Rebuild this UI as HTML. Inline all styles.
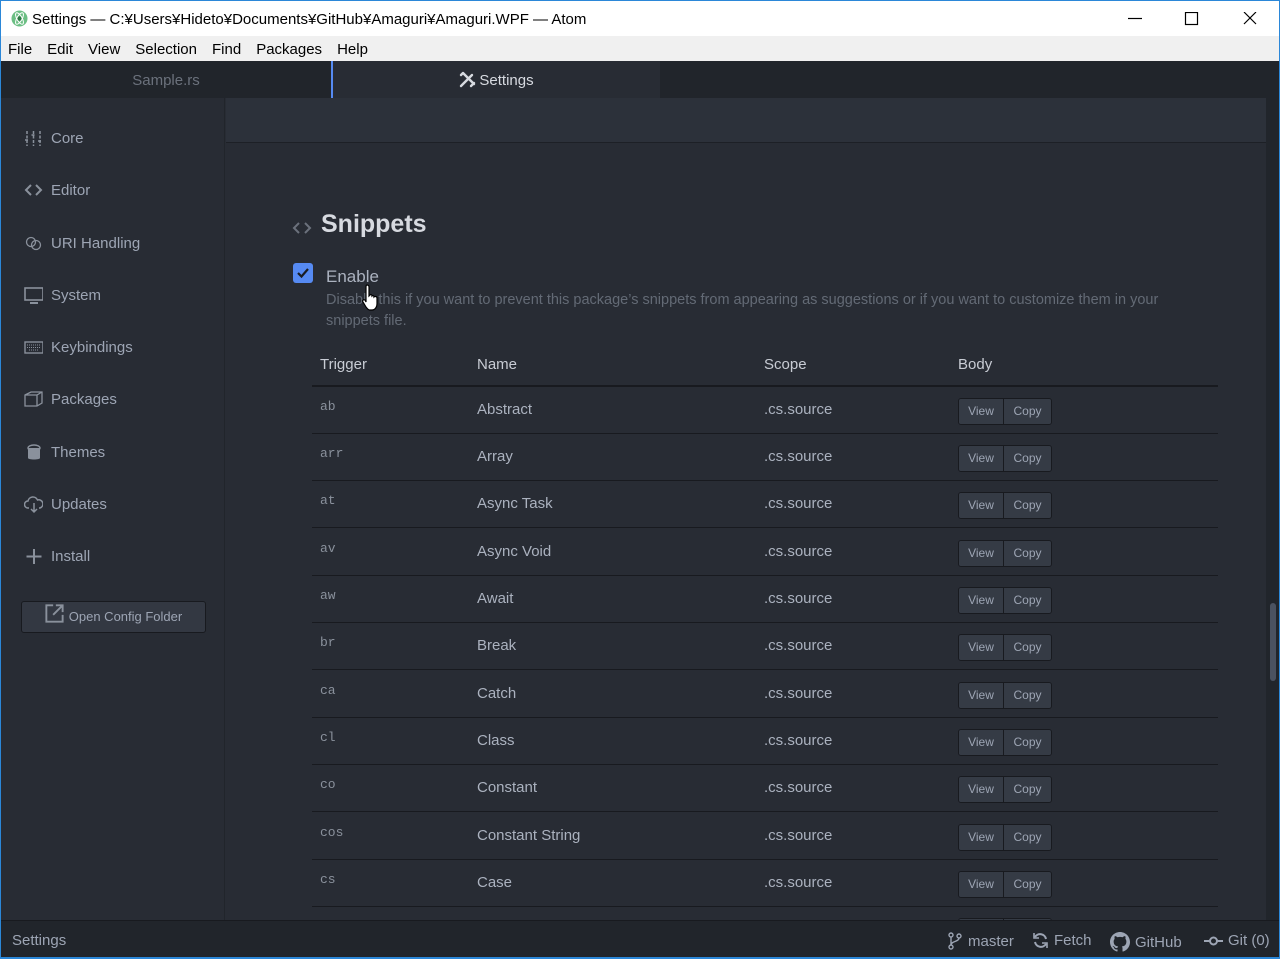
<!DOCTYPE html>
<html><head><meta charset="utf-8"><style>
*{box-sizing:border-box;margin:0;padding:0}
body{width:1280px;height:959px;overflow:hidden;background:#282c34;font-family:"Liberation Sans","Noto Sans CJK JP",sans-serif;position:relative;color:#9da5b4}
.abs{position:absolute}
#win{position:absolute;left:0;top:0;width:1280px;height:959px;border:1px solid #2b87d8;border-top:1px solid #2b87d8}
#title{left:1px;top:1px;width:1278px;height:35px;background:#fff;color:#000;font-size:15px;line-height:35px}
#menu{left:1px;top:36px;width:1278px;height:25px;background:#f0f0f0;color:#000;font-size:15px;line-height:27px}
#menu span{margin-left:7px;margin-right:8px}
#tabs{left:1px;top:61px;width:1278px;height:37px;background:#21252b}
.side a{position:absolute;left:23px;font-size:15px;color:#9da5b4;display:flex;align-items:center;gap:8px}
.side svg{width:19px;height:19px}
.row{position:absolute;left:312px;width:906px;height:47px;border-bottom:1px solid #181a1f;font-size:15px;color:#abb2bf}
.row .t{position:absolute;left:8px;top:12px;font-family:"Liberation Mono",monospace;font-size:13px;color:#8a919c}
.row .n{position:absolute;left:165px;top:14px}
.row .s{position:absolute;left:452px;top:14px}
.btns{position:absolute;left:646px;top:11px;height:27px;display:flex;border:1px solid #181a1f;border-radius:3px;overflow:hidden;font-size:12px;color:#9da5b4}
.btns span{background:#353b45;line-height:25px;display:block}
.btns span:first-child{width:45px;text-align:center;border-right:1px solid #181a1f}
.btns span:last-child{width:47px;text-align:center}
.st{font-size:15px;color:#9da5b4;top:931px;display:flex;align-items:center;gap:5px}
</style></head><body>
<div id="win"></div>
<div id="title" class="abs">
 <svg class="abs" style="left:10px;top:9px" width="17" height="17" viewBox="0 0 17 17"><circle cx="8.5" cy="8.5" r="8" fill="#6cbf84"/><circle cx="8.5" cy="8.5" r="2.3" fill="#2e7a45"/><ellipse cx="8.5" cy="8.5" rx="6.5" ry="2.6" fill="none" stroke="#fff" stroke-width="1" transform="rotate(60 8.5 8.5)"/><ellipse cx="8.5" cy="8.5" rx="6.5" ry="2.6" fill="none" stroke="#fff" stroke-width="1" transform="rotate(-60 8.5 8.5)"/></svg>
 <span class="abs" style="left:31px;top:1px">Settings — C:¥Users¥Hideto¥Documents¥GitHub¥Amaguri¥Amaguri.WPF — Atom</span>
 <svg class="abs" style="left:1127px;top:11px" width="140" height="14" viewBox="0 0 140 14"><path d="M0 6.5h14" stroke="#000" stroke-width="1.2"/><rect x="57.5" y="0.5" width="12" height="12" fill="none" stroke="#000" stroke-width="1.2"/><path d="M116 0l12 12M128 0l-12 12" stroke="#000" stroke-width="1.2"/></svg>
</div>
<div id="menu" class="abs"><span>File</span><span>Edit</span><span>View</span><span>Selection</span><span>Find</span><span>Packages</span><span>Help</span></div>
<div id="tabs" class="abs">
 <div class="abs" style="left:0;top:0;width:330px;height:37px;color:#6b717c;font-size:15px;text-align:center;line-height:40px">Sample.rs</div>
 <div class="abs" style="left:330px;top:0;width:329px;height:38px;background:#282c34;border-left:2px solid #568af2;color:#d7dae0;font-size:15px;line-height:40px;text-align:center">
  <svg style="vertical-align:-3px;margin-right:3px" width="17" height="17" viewBox="0 0 17 17"><path d="M2 15L13 4M4 2l11 11M12 15l3-3M2 4l2-2" stroke="#d7dae0" stroke-width="2.4" fill="none" stroke-linecap="round"/></svg>Settings</div>
</div>
<!-- sidebar -->
<div class="abs side" style="left:1px;top:98px;width:224px;height:822px;background:#282c34;border-right:1px solid #21252b">
 <a style="top:31px"><svg viewBox="0 0 19 19"><path d="M3 2v15M9.5 2v15M16 2v15M1 11h4M7.5 6h4M14 12h4" stroke="#8a919c" stroke-width="1.5" stroke-dasharray="3 1.5"/></svg>Core</a>
 <a style="top:83px"><svg viewBox="0 0 19 19"><path d="M7 4L2 9l5 5M12 4l5 5-5 5" stroke="#8a919c" stroke-width="2" fill="none"/></svg>Editor</a>
 <a style="top:136px"><svg viewBox="0 0 19 19"><circle cx="7" cy="8" r="4.5" stroke="#8a919c" fill="none" stroke-width="1.3"/><circle cx="12" cy="11" r="4.5" stroke="#8a919c" fill="none" stroke-width="1.3"/></svg>URI Handling</a>
 <a style="top:188px"><svg viewBox="0 0 19 19"><rect x="1" y="2" width="18" height="12" fill="none" stroke="#8a919c" stroke-width="1.6"/><path d="M6 17h8" stroke="#8a919c" stroke-width="2"/></svg>System</a>
 <a style="top:240px"><svg viewBox="0 0 19 19"><rect x="1" y="4" width="18" height="11" fill="none" stroke="#8a919c" stroke-width="1.4"/><path d="M3 7h14M3 9.5h14M5 12h10" stroke="#8a919c" stroke-dasharray="1 1"/></svg>Keybindings</a>
 <a style="top:292px"><svg viewBox="0 0 19 19"><path d="M1 5l6-3h11v11l-5 3H1z M1 5h12v11M13 5l5-3" fill="none" stroke="#8a919c" stroke-width="1.3"/></svg>Packages</a>
 <a style="top:345px"><svg viewBox="0 0 19 19"><ellipse cx="10" cy="5" rx="6" ry="3" fill="none" stroke="#8a919c" stroke-width="1.4"/><path d="M4 5v10c0 2 12 2 12 0V5" fill="#8a919c"/></svg>Themes</a>
 <a style="top:397px"><svg viewBox="0 0 19 19"><path d="M5 13H4a3.5 3.5 0 010-7 5 5 0 019.5-1A3.5 3.5 0 0116 13h-1M10 8v9M7 14l3 3 3-3" fill="none" stroke="#8a919c" stroke-width="1.5"/></svg>Updates</a>
 <a style="top:449px"><svg viewBox="0 0 19 19"><path d="M10 2v15M2.5 9.5h15" stroke="#8a919c" stroke-width="2"/></svg>Install</a>
 <div class="abs" style="left:20px;top:503px;width:185px;height:32px;background:#333842;border:1px solid #181a1f;border-radius:3px;font-size:13px;color:#9da5b4;text-align:center;line-height:30px"><svg width="14" height="14" viewBox="0 0 14 14" style="vertical-align:-2px;margin-right:5px"><path d="M6 1H1v12h12V8M8 1h5v5M13 1L6 8" fill="none" stroke="#8a919c" stroke-width="1.4"/></svg>Open Config Folder</div>
</div>
<!-- content -->
<div class="abs" style="left:226px;top:98px;width:1040px;height:45px;background:#2c313a;border-bottom:1px solid #1d2026"></div>
<div class="abs" style="left:1266px;top:98px;width:13px;height:822px;background:#21252b"></div>
<div class="abs" style="left:1270px;top:603px;width:6px;height:78px;background:#4b5260;border-radius:3px"></div>
<svg class="abs" style="left:292px;top:220px" width="20" height="16" viewBox="0 0 20 16"><path d="M7 3L2 8l5 5M13 3l5 5-5 5" stroke="#6b717c" stroke-width="2" fill="none"/></svg>
<div class="abs" style="left:321px;top:210px;font-size:25px;color:#d7dae0;font-weight:bold">Snippets</div>
<div class="abs" style="left:293px;top:263px;width:20px;height:20px;background:#568af2;border-radius:3px"><svg width="20" height="20"><path d="M5 10l3.5 3.5L15 6" stroke="#1a1d22" stroke-width="2.2" fill="none"/></svg></div>
<div class="abs" style="left:326px;top:267px;font-size:17px;color:#abb2bf">Enable</div>
<div class="abs" style="left:326px;top:290px;width:865px;font-size:14.5px;line-height:21px;color:#636a75">Disable this if you want to prevent this package’s snippets from appearing as suggestions or if you want to customize them in your snippets file.</div>
<svg class="abs" style="left:362px;top:283px" width="22" height="30" viewBox="0 0 22 30"><path d="M5 2c1.5 0 2 1 2 2v9l1-1c1-1 2 0 2 1 1-1 2 0 2 1 1-1 3-0.5 3 1v6c0 3-2 6-5 6H8c-2 0-3-2-4-3l-3-5c-1-1 0-3 2-2l1 2V4c0-1 0-2 1-2z" fill="#fff" stroke="#000" stroke-width="1.2"/></svg>
<div class="abs" style="left:312px;top:356px;width:906px;height:31px;border-bottom:2px solid #181a1f;font-size:15px;color:#c8ccd4">
 <span class="abs" style="left:8px">Trigger</span><span class="abs" style="left:165px">Name</span><span class="abs" style="left:452px">Scope</span><span class="abs" style="left:646px">Body</span>
</div>
<div class="row" style="top:387px"><span class="t">ab</span><span class="n">Abstract</span><span class="s">.cs.source</span><div class="btns"><span>View</span><span>Copy</span></div></div>
<div class="row" style="top:434px"><span class="t">arr</span><span class="n">Array</span><span class="s">.cs.source</span><div class="btns"><span>View</span><span>Copy</span></div></div>
<div class="row" style="top:481px"><span class="t">at</span><span class="n">Async Task</span><span class="s">.cs.source</span><div class="btns"><span>View</span><span>Copy</span></div></div>
<div class="row" style="top:529px"><span class="t">av</span><span class="n">Async Void</span><span class="s">.cs.source</span><div class="btns"><span>View</span><span>Copy</span></div></div>
<div class="row" style="top:576px"><span class="t">aw</span><span class="n">Await</span><span class="s">.cs.source</span><div class="btns"><span>View</span><span>Copy</span></div></div>
<div class="row" style="top:623px"><span class="t">br</span><span class="n">Break</span><span class="s">.cs.source</span><div class="btns"><span>View</span><span>Copy</span></div></div>
<div class="row" style="top:671px"><span class="t">ca</span><span class="n">Catch</span><span class="s">.cs.source</span><div class="btns"><span>View</span><span>Copy</span></div></div>
<div class="row" style="top:718px"><span class="t">cl</span><span class="n">Class</span><span class="s">.cs.source</span><div class="btns"><span>View</span><span>Copy</span></div></div>
<div class="row" style="top:765px"><span class="t">co</span><span class="n">Constant</span><span class="s">.cs.source</span><div class="btns"><span>View</span><span>Copy</span></div></div>
<div class="row" style="top:813px"><span class="t">cos</span><span class="n">Constant String</span><span class="s">.cs.source</span><div class="btns"><span>View</span><span>Copy</span></div></div>
<div class="row" style="top:860px"><span class="t">cs</span><span class="n">Case</span><span class="s">.cs.source</span><div class="btns"><span>View</span><span>Copy</span></div></div>
<div class="row" style="top:907px;border:none"><div class="btns"><span>View</span><span>Copy</span></div></div>
<!-- status bar -->
<div class="abs" style="left:1px;top:920px;width:1278px;height:37px;background:#21252b;border-top:1px solid #181a1f"></div>
<div class="abs st" style="left:12px;top:932px">Settings</div>
<div class="abs st" style="left:947px;top:932px"><svg width="16" height="18" viewBox="0 0 16 18"><circle cx="4" cy="3" r="2" fill="none" stroke="#9da5b4" stroke-width="1.4"/><circle cx="4" cy="15" r="2" fill="none" stroke="#9da5b4" stroke-width="1.4"/><circle cx="12" cy="4" r="2" fill="none" stroke="#9da5b4" stroke-width="1.4"/><path d="M4 5v8M12 6c0 4-8 3-8 7" fill="none" stroke="#9da5b4" stroke-width="1.4"/></svg>master</div>
<div class="abs st" style="left:1032px;top:932px"><svg width="17" height="17" viewBox="0 0 17 17"><path d="M14 7A6 6 0 003 5M3 10a6 6 0 0011 2" fill="none" stroke="#9da5b4" stroke-width="2"/><path d="M2 1v5h5M15 16v-5h-5" fill="none" stroke="#9da5b4" stroke-width="1.6"/></svg>Fetch</div>
<div class="abs st" style="left:1110px;top:932px"><svg width="20" height="20" viewBox="0 0 16 16"><path fill="#9da5b4" d="M8 0C3.58 0 0 3.58 0 8c0 3.54 2.29 6.530 5.47 7.590.4.07.55-.17.55-.38v-1.33c-2.23.48-2.7-1.07-2.7-1.07-.36-.92-.89-1.17-.89-1.17-.73-.5.05-.49.05-.49.8.06 1.23.83 1.23.83.71 1.220 1.870.87 2.330.66.07-.52.28-.87.51-1.07-1.78-.2-3.64-.89-3.64-3.95 0-.87.31-1.59.82-2.15-.08-.2-.36-1.02.08-2.12 0 0 .67-.21 2.2.82.64-.18 1.32-.27 2-.27.68 0 1.36.09 2 .27 1.53-1.04 2.2-.82 2.2-.82.44 1.1.16 1.92.08 2.12.51.56.82 1.27.82 2.15 0 3.07-1.87 3.75-3.65 3.95.29.25.54.73.54 1.48v2.2c0 .21.15.46.55.38A8.013 8.013 0 0016 8c0-4.42-3.58-8-8-8z"/></svg>GitHub</div>
<div class="abs st" style="left:1204px;top:932px"><svg width="19" height="12" viewBox="0 0 19 12"><circle cx="9.5" cy="6" r="3.5" fill="none" stroke="#9da5b4" stroke-width="2"/><path d="M0 6h6M13 6h6" stroke="#9da5b4" stroke-width="2"/></svg>Git (0)</div>
<div class="abs" style="left:0;top:957px;width:1280px;height:2px;background:#2b87d8"></div>
</body></html>
